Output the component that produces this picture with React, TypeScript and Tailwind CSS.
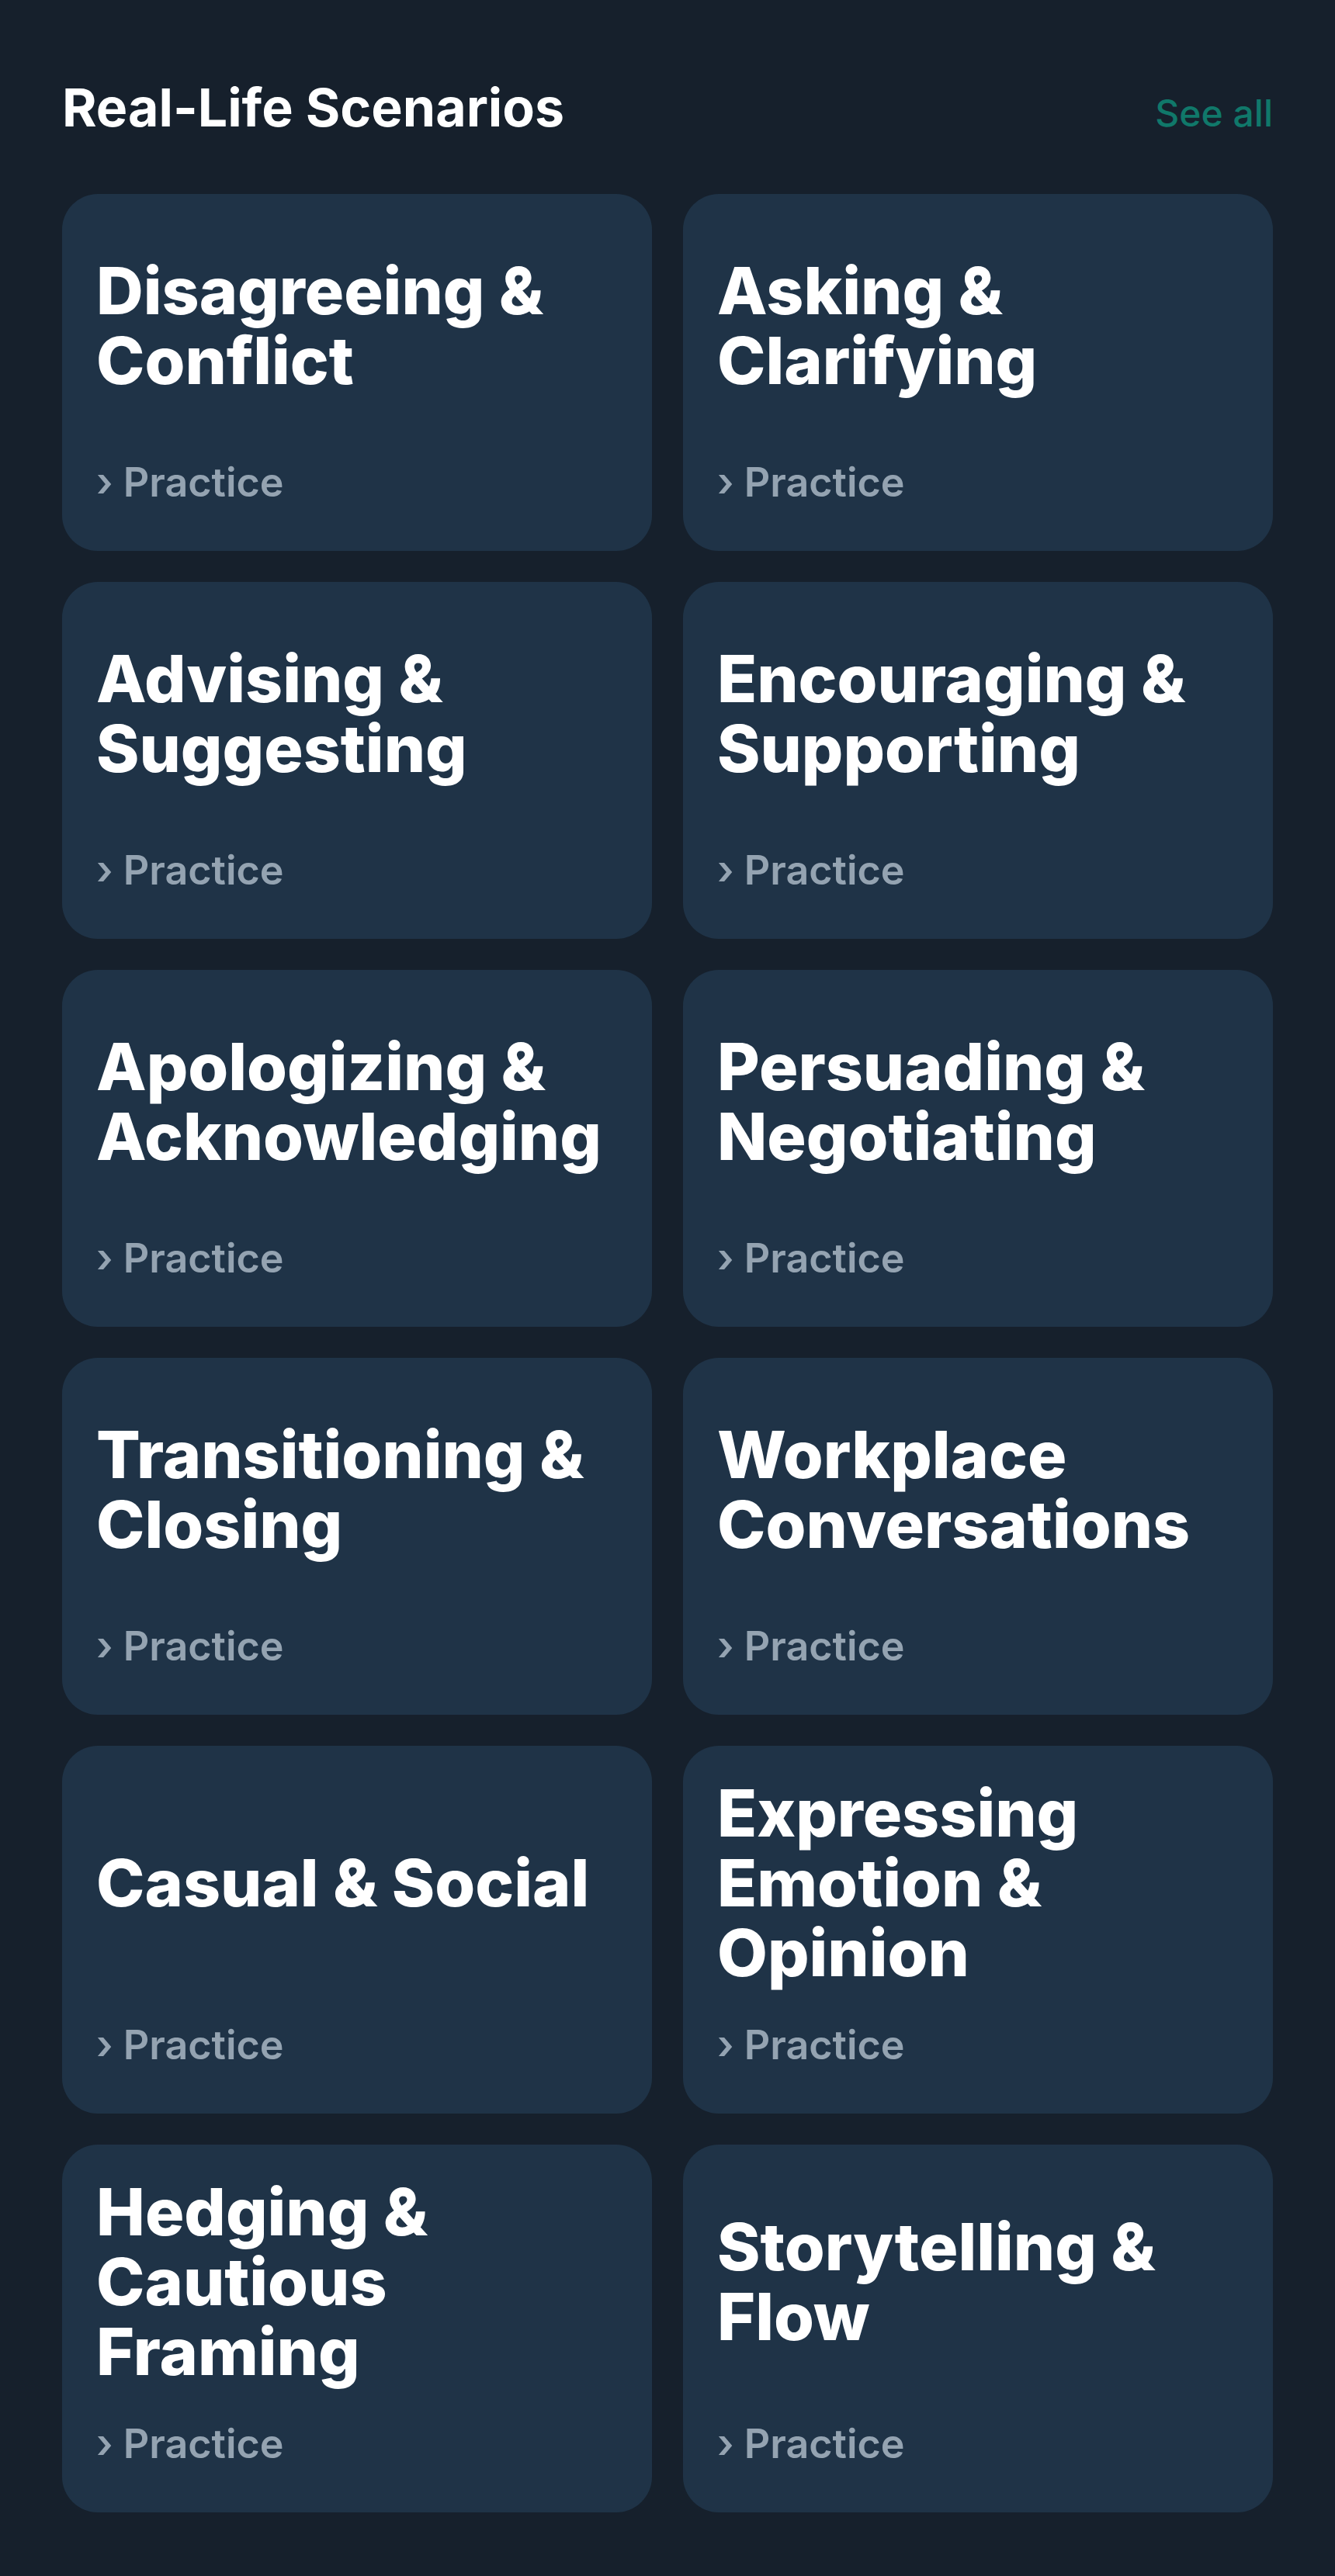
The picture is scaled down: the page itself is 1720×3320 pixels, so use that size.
import React from 'react';

const scenarios = [
  'Disagreeing & Conflict',
  'Asking & Clarifying',
  'Advising & Suggesting',
  'Encouraging & Supporting',
  'Apologizing & Acknowledging',
  'Persuading & Negotiating',
  'Transitioning & Closing',
  'Workplace Conversations',
  'Casual & Social',
  'Expressing Emotion & Opinion',
  'Hedging & Cautious Framing',
  'Storytelling & Flow',
];

function ScenarioCard({ title }: { title: string }) {
  return (
    <div className="flex flex-col rounded-[46px] bg-[#1f3347] px-[44px] pt-[42px] pb-[52px]">
      <div className="flex min-h-[256px] flex-1 items-center">
        <h3 className="text-[84px] font-extrabold leading-[90px] text-white">{title}</h3>
      </div>
      <div className="mt-[38px] text-[52px] font-semibold leading-[72px] text-[#94a3b1]">
        › Practice
      </div>
    </div>
  );
}

export default function App() {
  return (
    <div
      className="min-h-screen bg-[#16202c] px-[80px] pt-[98px] pb-[84px]"
      style={{ fontFamily: 'Inter, "Noto Sans", sans-serif' }}
    >
      <div className="mb-[72px] flex items-baseline justify-between">
        <h2 className="text-[68px] font-bold leading-[80px] text-white">Real-Life Scenarios</h2>
        <a className="text-[48px] font-medium leading-[60px] text-[#10786a]">See all</a>
      </div>
      <div className="grid grid-cols-2 gap-[40px]">
        {scenarios.map((s) => (
          <ScenarioCard key={s} title={s} />
        ))}
      </div>
    </div>
  );
}
